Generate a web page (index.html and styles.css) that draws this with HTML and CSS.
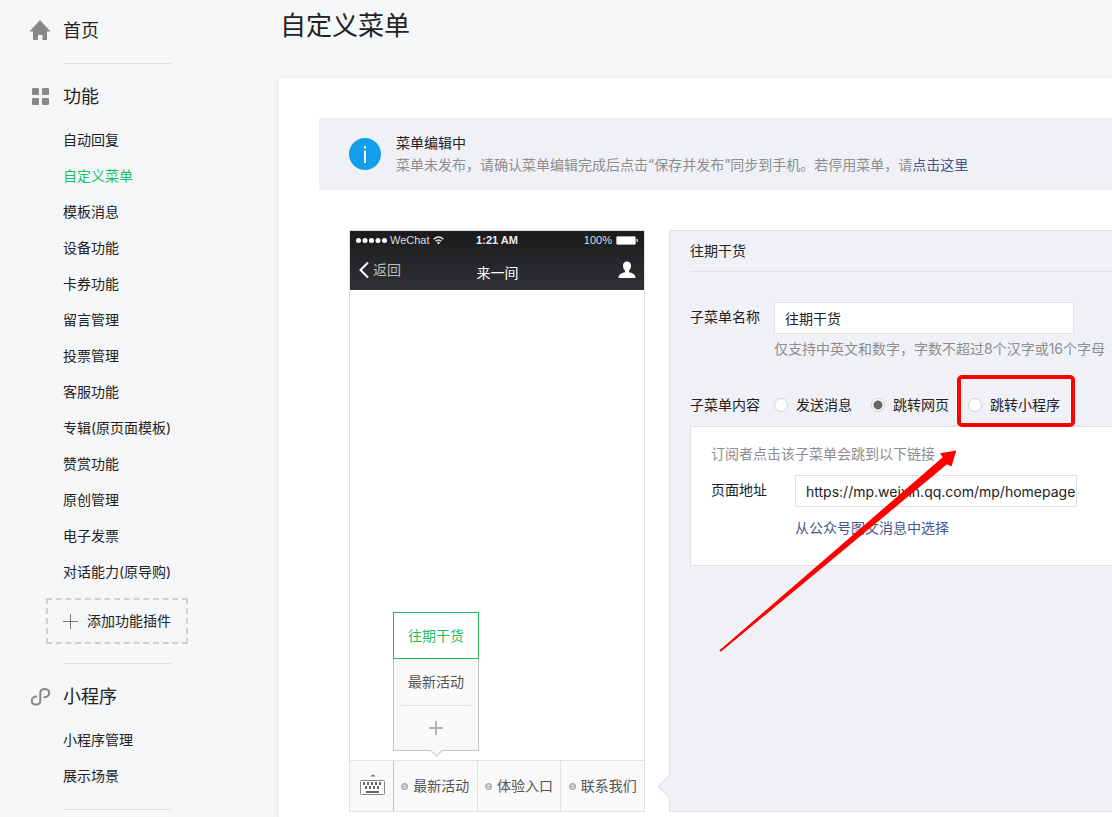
FILE: index.html
```html
<!DOCTYPE html>
<html lang="zh-CN">
<head>
  <meta charset="UTF-8">
  <meta name="viewport" content="width=device-width, initial-scale=1.0">
  <title>自定义菜单</title>
  <link rel="stylesheet" href="styles.css">
</head>
<body>
<nav class="sidebar">
  <section class="nav-group">
    <h2 class="nav-title">
      <svg class="nav-icon" viewBox="0 0 20 20"><path d="M10 -1L20.500 10.500H17V19H12.500V14H8V19H3V10.500H-.5Z" fill="#888"/></svg>
      <a href="#">首页</a>
    </h2>
  </section>
  <section class="nav-group">
    <h2 class="nav-title">
      <svg class="nav-icon" viewBox="0 0 20 20" fill="#888"><rect x="2" y="1" width="7" height="7" rx="1"/><rect x="12" y="1" width="7" height="7" rx="1"/><rect x="2" y="11" width="7" height="7" rx="1"/><rect x="12" y="11" width="7" height="7" rx="1"/></svg>
      功能
    </h2>
    <ul class="nav-list">
      <li><a href="#">自动回复</a></li>
      <li><a href="#" class="active">自定义菜单</a></li>
      <li><a href="#">模板消息</a></li>
      <li><a href="#">设备功能</a></li>
      <li><a href="#">卡券功能</a></li>
      <li><a href="#">留言管理</a></li>
      <li><a href="#">投票管理</a></li>
      <li><a href="#">客服功能</a></li>
      <li><a href="#">专辑(原页面模板)</a></li>
      <li><a href="#">赞赏功能</a></li>
      <li><a href="#">原创管理</a></li>
      <li><a href="#">电子发票</a></li>
      <li><a href="#">对话能力(原导购)</a></li>
    </ul>
    <button type="button" class="add-plugin">
      <svg width="15" height="15" viewBox="0 0 15 15"><path d="M7.500 0V15M0 7.500H15" stroke="#777"/></svg>
      添加功能插件
    </button>
  </section>
  <section class="nav-group">
    <h2 class="nav-title">
      <svg class="nav-icon" viewBox="0 0 20 20"><path d="M14.300 10.200C17.200 9.800 19.200 8.200 19.200 5.900C19.200 3.600 17.300 2 14.800 2C12.200 2 10.300 3.600 10.300 6.100V13.400C10.300 16 8.600 17.500 6.200 17.500C3.700 17.500 1.800 16 1.800 13.700C1.800 11.300 3.800 9.700 6.300 9.400" fill="none" stroke="#888" stroke-width="2" stroke-linecap="round"/></svg>
      小程序
    </h2>
    <ul class="nav-list">
      <li><a href="#">小程序管理</a></li>
      <li><a href="#">展示场景</a></li>
    </ul>
  </section>
</nav>

<main class="main">
  <h1 class="page-title">自定义菜单</h1>
  <div class="card">
    <div class="notice">
      <svg class="notice-icon" viewBox="0 0 32 32"><circle cx="16" cy="16" r="16" fill="#149deb"/><path d="M15 8H17V10.500H15ZM15 12.500H17V25H15Z" fill="#fff"/></svg>
      <div>
        <strong class="notice-title">菜单编辑中</strong>
        <p class="notice-text">菜单未发布，请确认菜单编辑完成后点击“保存并发布”同步到手机。若停用菜单，请<a href="#">点击这里</a></p>
      </div>
    </div>

    <div class="workspace">
      <div class="phone">
        <header class="phone-header">
          <div class="status-bar">
            <span class="carrier">
              <svg width="31" height="7" viewBox="0 0 31 7" fill="#fff"><circle cx="2.500" cy="3.500" r="2.500"/><circle cx="9" cy="3.500" r="2.500"/><circle cx="15.500" cy="3.500" r="2.500"/><circle cx="22" cy="3.500" r="2.500"/><circle cx="28.500" cy="3.500" r="2.500"/></svg>
              WeChat
              <svg width="11" height="9" viewBox="0 0 11 9" fill="none" stroke="#ddd" stroke-width="1.400"><path d="M.6 3.200Q5.500-1.300 10.400 3.200M2.500 5.300Q5.500 2.500 8.500 5.300"/><path d="M3.800 6.500Q5.500 5.200 7.200 6.500L5.500 8.500Z" fill="#ddd" stroke="none"/></svg>
            </span>
            <b class="clock">1:21 AM</b>
            <span class="battery">
              100%
              <svg width="22" height="9" viewBox="0 0 22 9"><rect x=".5" y=".5" width="19" height="8" rx="1" fill="#fff" stroke="#aaa"/><path d="M20.500 3H22V6H20.500Z" fill="#bbb"/></svg>
            </span>
          </div>
          <div class="phone-nav">
            <span class="back">
              <svg width="10" height="18" viewBox="0 0 10 18"><path d="M9 1.500L1.500 9L9 16.500" fill="none" stroke="#fff" stroke-width="2"/></svg>
              返回
            </span>
            <span class="phone-title">来一间</span>
            <svg class="avatar" width="18" height="18" viewBox="0 0 18 18"><path d="M9 .5C11.700.5 13 2.300 13 4.800C13 7 12.200 8.600 11 9.600V11.300C14.500 12.200 17.500 13.200 17.500 17H.5C.5 13.200 3.500 12.200 7 11.300V9.600C5.800 8.600 5 7 5 4.800C5 2.300 6.300.5 9 .5Z" fill="#fff"/></svg>
          </div>
        </header>
        <div class="phone-screen"></div>
        <div class="phone-menu">
          <div class="keyboard">
            <svg width="23" height="24" viewBox="0 0 23 24"><path d="M10.500 2.500Q13-1 15.500 2.500Z" fill="#666"/><rect x=".5" y="6.500" width="24" height="14" rx="1" fill="#fff" stroke="#84878c"/><path d="M3 9.500H22" stroke="#666" stroke-width="3" stroke-dasharray="2 2"/><path d="M5 13.500H20" stroke="#666" stroke-width="3" stroke-dasharray="2 2"/><path d="M6 18H19" stroke="#666" stroke-width="2"/></svg>
          </div>
          <div class="menu-cell current">
            <button type="button" class="menu-button"><svg class="dot" viewBox="0 0 7 7"><circle cx="3.500" cy="3.500" r="2.800"/><path d="M1 3.500H6"/></svg>最新活动</button>
            <ul class="submenu">
              <li class="selected"><a href="#">往期干货</a></li>
              <li><a href="#">最新活动</a></li>
              <li><button type="button" class="add-item" aria-label="添加"><svg width="14" height="14" viewBox="0 0 14 14"><path d="M7 0V14M0 7H14" stroke="#b3b3b3" stroke-width="2"/></svg></button></li>
            </ul>
          </div>
          <div class="menu-cell">
            <button type="button" class="menu-button"><svg class="dot" viewBox="0 0 7 7"><circle cx="3.500" cy="3.500" r="2.800"/><path d="M1 3.500H6"/></svg>体验入口</button>
          </div>
          <div class="menu-cell">
            <button type="button" class="menu-button"><svg class="dot" viewBox="0 0 7 7"><circle cx="3.500" cy="3.500" r="2.800"/><path d="M1 3.500H6"/></svg>联系我们</button>
          </div>
        </div>
      </div>

      <form class="editor">
        <h3 class="editor-title">往期干货</h3>
        <div class="field name-field">
          <label class="field-label" for="menu-name">子菜单名称</label>
          <div>
            <input type="text" class="text-input" id="menu-name" value="往期干货">
            <p class="hint">仅支持中英文和数字，字数不超过8个汉字或16个字母</p>
          </div>
        </div>
        <div class="field type-field" role="radiogroup" aria-labelledby="type-label">
          <span class="field-label" id="type-label">子菜单内容</span>
          <div class="radios">
            <label class="radio"><input type="radio" name="type">发送消息</label>
            <label class="radio"><input type="radio" name="type" checked>跳转网页</label>
            <label class="radio marked"><input type="radio" name="type">跳转小程序</label>
          </div>
        </div>
        <div class="link-box">
          <p class="link-tip">订阅者点击该子菜单会跳到以下链接</p>
          <div class="field">
            <label class="field-label" for="page-url">页面地址</label>
            <div>
              <input type="text" class="text-input url-input" id="page-url" value="https://mp.weixin.qq.com/mp/homepage">
              <a href="#" class="pick-link">从公众号图文消息中选择</a>
            </div>
          </div>
        </div>
        <svg class="pointer" width="240" height="204" viewBox="0 0 240 204"><path d="M.3 201.500L223.700 8.300L221 4.300L237.300 1.500L232.500 17.500L228 15.300L1.800 202.800Z" fill="red"/></svg>
      </form>
    </div>
  </div>
</main>
</body>
</html>
```
FILE: styles.css
```css
* {
  box-sizing: border-box;
}

body {
  margin: 0;
  display: flex;
  min-height: 100vh;
  overflow: hidden;
  background-color: #f5f6f8;
  color: #222;
  font-family: Inter, "Noto Sans CJK SC", sans-serif;
  font-size: 14px;
  line-height: 22px;
}

h1, h2, h3, p, ul {
  margin: 0;
  padding: 0;
  font-weight: 400;
}

ul {
  list-style: none;
}

a {
  color: inherit;
  text-decoration: none;
}

button, input {
  font: inherit;
  color: inherit;
}

button {
  cursor: pointer;
}

svg {
  display: block;
  flex: none;
  overflow: visible;
}

/* sidebar */
.sidebar {
  flex: none;
  width: 279px;
  height: 100vh;
  overflow: hidden;
  padding-top: 18px;
}

.nav-group {
  display: flex;
  flex-direction: column;
  align-items: flex-start;
}

.nav-group::after {
  content: "";
  width: 108px;
  margin: 15px 0 0 63px;
  border-bottom: 1px solid #dfe0e3;
}

.nav-group + .nav-group {
  padding-top: 20px;
}

.nav-title {
  display: flex;
  align-items: center;
  gap: 13px;
  margin: 0 0 4px 30px;
  font-size: 18px;
  line-height: 26px;
}

.nav-icon {
  width: 20px;
  height: 20px;
}

.nav-list {
  margin: 8px 0 0 63px;
}

.nav-list a {
  display: block;
  line-height: 36px;
}

.nav-list .active {
  color: #1fbf5b;
}

.add-plugin {
  display: flex;
  align-items: center;
  gap: 9px;
  height: 46px;
  margin: 8px 0 4px 46px;
  padding: 0 15px;
  border: 2px dashed #cfd0d2;
  background: none;
}

/* main column */
.main {
  flex: 1;
  min-width: 0;
  display: flex;
  flex-direction: column;
  height: 100vh;
}

.page-title {
  padding: 8px 0 34px 1px;
  font-size: 26px;
  line-height: 36px;
}

.card {
  flex: 1 0 auto;
  padding: 40px 0 0 40px;
  border-radius: 3px 0 0 0;
  background-color: #fff;
  box-shadow: 0 1px 6px rgba(0, 30, 20, 0.08);
}

.notice {
  display: flex;
  align-items: center;
  gap: 15px;
  padding: 14px 30px;
  background-color: #f0f1f7;
}

.notice-icon {
  width: 32px;
  height: 32px;
}

.notice-title {
  display: block;
  font-weight: 400;
}

.notice-text {
  color: #8d8d8d;
}

.notice-text a, .pick-link {
  color: #44568f;
}

.workspace {
  display: flex;
  gap: 24px;
  margin: 40px 0 5px 30px;
}

/* phone preview */
.phone {
  flex: none;
  width: 296px;
  border: 1px solid #e0e1e6;
}

.phone-header {
  height: 59px;
  background: linear-gradient(#1b1b1d, #303135);
  color: #fff;
}

.status-bar, .phone-nav {
  display: grid;
  grid-template-columns: 1fr auto 1fr;
  align-items: center;
  padding: 0 6px;
}

.status-bar {
  height: 18px;
  font-family: "Liberation Sans", Arial, sans-serif;
  font-size: 11px;
  line-height: 18px;
}

.carrier, .battery, .back {
  display: flex;
  align-items: center;
  gap: 3px;
  color: #ddd;
}

.battery {
  justify-content: flex-end;
  gap: 4px;
}

.clock {
  color: #eee;
}

.phone-nav {
  height: 41px;
  padding: 0 8px 0 9px;
}

.back {
  gap: 4px;
  color: #bbb;
}

.phone-title {
  padding-top: 6px;
}

.avatar {
  justify-self: end;
}

.phone-screen {
  height: 470px;
}

.phone-menu {
  display: flex;
  height: 51px;
  border-top: 1px solid #e0e1e6;
  background-color: #f9f9fa;
}

.keyboard {
  width: 43px;
  display: flex;
  align-items: center;
  justify-content: center;
}

.menu-cell {
  position: relative;
  flex: 1;
  border-left: 1px solid #e0e1e6;
}

.menu-cell.current {
  border-left-color: #c2c2c4;
}

.menu-button {
  display: flex;
  align-items: center;
  justify-content: center;
  gap: 5px;
  width: 100%;
  height: 100%;
  padding: 0;
  border: none;
  background: none;
  color: #555;
}

.dot {
  width: 7px;
  height: 7px;
  fill: none;
  stroke: #aaa;
  stroke-width: 1.4;
}

.submenu {
  position: absolute;
  left: -1px;
  bottom: 60px;
  width: 86px;
  border: 1px solid #c2c2c4;
  background-color: #f9f9fa;
  color: #555;
  line-height: 46px;
  text-align: center;
}

.submenu::after {
  content: "";
  position: absolute;
  left: 38px;
  bottom: -5px;
  width: 8px;
  height: 8px;
  border: solid #c2c2c4;
  border-width: 0 1px 1px 0;
  background-color: #f9f9fa;
  transform: rotate(45deg);
}

.submenu li {
  height: 46px;
  margin: 0 7px;
}

.submenu li a {
  display: block;
}

.submenu li:last-child {
  height: 45px;
  border-top: 1px solid #e0e1e6;
}

.submenu .selected {
  height: 47px;
  margin: -1px -1px 0;
  border: 1px solid #1fb955;
  background-color: #fff;
  color: #1fbf5b;
}

.add-item {
  display: flex;
  align-items: center;
  justify-content: center;
  width: 100%;
  height: 100%;
  padding: 0;
  border: none;
  background: none;
}

/* editor */
.editor {
  position: relative;
  flex: 1;
  min-width: 0;
  padding-left: 20px;
  border: 1px solid #e0e1e6;
  border-right: none;
  background-color: #f0f1f7;
}

.editor::before {
  content: "";
  position: absolute;
  left: -9px;
  bottom: 16px;
  width: 16px;
  height: 16px;
  border: solid #e0e1e6;
  border-width: 0 0 1px 1px;
  background-color: #f0f1f7;
  transform: rotate(45deg);
}

.editor-title {
  border-bottom: 1px solid #e0e1e6;
  font-size: 14px;
  line-height: 40px;
}

.field {
  display: flex;
}

.field-label {
  flex: none;
  width: 84px;
}

.name-field {
  margin-top: 30px;
}

.text-input {
  display: block;
  width: 300px;
  height: 32px;
  padding: 0 0 0 10px;
  border: 1px solid #e0e1e6;
  border-radius: 0;
  background-color: #fff;
}

.url-input {
  width: 282px;
}

.field-label[for] {
  line-height: 30px;
}

.hint {
  margin-top: 4px;
  color: #8d8d8d;
  white-space: nowrap;
}

.type-field {
  margin-top: 34px;
}

.radios {
  display: flex;
  gap: 19px;
}

.radio {
  display: flex;
  align-items: center;
  gap: 8px;
  white-space: nowrap;
}

.radio input {
  appearance: none;
  width: 14px;
  height: 14px;
  margin: 0;
  border: 1px solid #d0d1d6;
  border-radius: 50%;
  background-color: #fff;
}

.radio input:checked {
  background-image: radial-gradient(circle, #666 4px, transparent 5px);
}

.marked {
  position: relative;
}

.marked::after {
  content: "";
  position: absolute;
  z-index: 1;
  top: -19px;
  right: -15px;
  bottom: -11px;
  left: -11px;
  border: 4px solid #f00;
  border-radius: 5px;
}

.link-box {
  margin-top: 10px;
  padding: 16px 0 26px 20px;
  border: 1px solid #e0e1e6;
  border-right: none;
  background-color: #fff;
}

.link-tip {
  margin-bottom: 10px;
  color: #8d8d8d;
}

.pick-link {
  display: inline-block;
  margin-top: 10px;
}

.pointer {
  position: absolute;
  top: 218px;
  left: 49px;
  pointer-events: none;
}
```
